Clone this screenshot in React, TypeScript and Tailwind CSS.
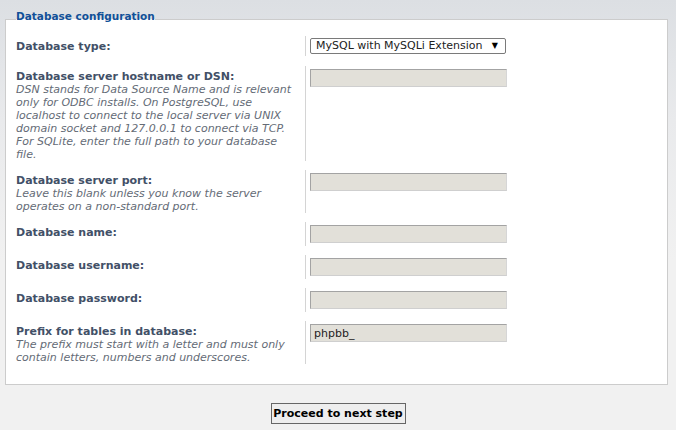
import React from "react";

type Row = {
  label: string;
  explain?: string[];
  value?: string;
};

const rows: Row[] = [
  {
    label: "Database server hostname or DSN:",
    explain: [
      "DSN stands for Data Source Name and is relevant",
      "only for ODBC installs. On PostgreSQL, use",
      "localhost to connect to the local server via UNIX",
      "domain socket and 127.0.0.1 to connect via TCP.",
      "For SQLite, enter the full path to your database",
      "file.",
    ],
  },
  {
    label: "Database server port:",
    explain: [
      "Leave this blank unless you know the server",
      "operates on a non-standard port.",
    ],
  },
  { label: "Database name:" },
  { label: "Database username:" },
  { label: "Database password:" },
  {
    label: "Prefix for tables in database:",
    explain: [
      "The prefix must start with a letter and must only",
      "contain letters, numbers and underscores.",
    ],
    value: "phpbb_",
  },
];

const App: React.FC = () => {
  return (
    <div className="min-h-[430px] w-[676px] bg-[linear-gradient(180deg,#dcdfe3_0px,#e9eaec_120px,#f1f1f1_260px)] pt-[9px] font-['DejaVu_Sans',sans-serif]">
      {/* Database configuration */}
      <fieldset className="ml-[5px] mr-[8px] border border-[#cccccc] bg-white px-[10px] pt-[7px] pb-[20px]">
        <legend className="pb-[6px] text-[10.5px] font-bold leading-[14px] text-[#115098]">
          Database configuration
        </legend>

        <div className="flex flex-col gap-[9px]">
          <div className="mb-[1px] flex">
            <div className="w-[290px] border-r border-[#d4d4d4] pt-[4px]">
              <label className="block text-[11px] font-bold leading-[13px] text-[#425067]">
                Database type:
              </label>
            </div>
            <div className="ml-[4px] py-[2px]">
              <div className="relative h-[16px] w-[196px]">
                <select className="block h-[16px] w-[196px] appearance-none rounded-[2px] border border-[#7a7a7a] bg-white pl-[5px] text-[11px] leading-[14px] text-[#222222] outline-none">
                  <option>MySQL with MySQLi Extension</option>
                </select>
                <span className="pointer-events-none absolute inset-y-0 right-[8px] flex items-center text-[8px] leading-none text-black">
                  ▼
                </span>
              </div>
            </div>
          </div>

          {rows.map((row) => (
            <div key={row.label} className="flex">
              <div className="w-[290px] border-r border-[#d4d4d4] pt-[4px]">
                <label className="block text-[11px] font-bold leading-[13px] text-[#425067]">
                  {row.label}
                </label>
                {row.explain && (
                  <span className="block whitespace-nowrap text-[11px] italic leading-[13px] text-[#646b76]">
                    {row.explain.map((line, i) => (
                      <React.Fragment key={i}>
                        {line}
                        {i < row.explain!.length - 1 && <br />}
                      </React.Fragment>
                    ))}
                  </span>
                )}
              </div>
              <div className="ml-[4px] py-[3px]">
                <input
                  type="text"
                  defaultValue={row.value}
                  className="block h-[18px] w-[197px] border border-t-[#a3a3a3] border-l-[#a3a3a3] border-r-[#d6d6d6] border-b-[#cfcfcf] bg-[#e2e0d9] px-[3px] text-[11px] text-[#222222] outline-none"
                />
              </div>
            </div>
          ))}
        </div>
      </fieldset>

      <div className="mt-[18px] flex justify-center">
        <button className="block h-[21px] w-[135px] border border-[#666666] bg-[#eeeeee] text-[11px] font-bold leading-[19px] text-black">
          Proceed to next step
        </button>
      </div>
    </div>
  );
};

export default App;
